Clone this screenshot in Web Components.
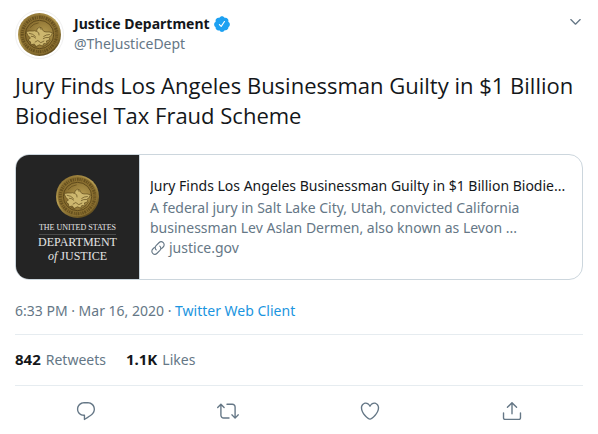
<!DOCTYPE html>
<html lang="en">
<head>
<meta charset="utf-8">
<meta name="viewport" content="width=device-width, initial-scale=1">
<title>Justice Department</title>
<style>
    body {
        background: #fff;
        color: #14171a;
        font: 14px/20px "Noto Sans", "Open Sans", sans-serif;
        margin: 0;
    }
</style>
</head>
<body>

<tweet-card>
    <tweet-header slot="header" name="Justice Department" handle="@TheJusticeDept"></tweet-header>
    Jury Finds Los Angeles Businessman Guilty in $1 Billion Biodiesel Tax Fraud Scheme
    <link-preview slot="preview" href="#justice" domain="justice.gov">
        <span slot="title">Jury Finds Los Angeles Businessman Guilty in $1 Billion Biodie...</span>
        A federal jury in Salt Lake City, Utah, convicted California businessman Lev Aslan Dermen, also known as Levon ...
    </link-preview>
    <tweet-meta slot="footer" time="6:33 PM · Mar 16, 2020" source="Twitter Web Client"></tweet-meta>
    <tweet-stats slot="footer" retweets="842" likes="1.1K"></tweet-stats>
    <tweet-actions slot="footer"></tweet-actions>
</tweet-card>

<script>
const ICONS = {
    chevron: '<path d="M20.207 8.147c-.39-.39-1.023-.39-1.414 0L12 14.94 5.207 8.147c-.39-.39-1.023-.39-1.414 0-.39.39-.39 1.023 0 1.414l7.5 7.5c.195.196.45.294.707.294s.512-.098.707-.293l7.5-7.5c.39-.39.39-1.022 0-1.413z"/>',
    verified: '<path d="M22.5 12.5c0-1.58-.875-2.95-2.148-3.6.154-.435.238-.905.238-1.4 0-2.21-1.71-3.998-3.818-3.998-.47 0-.92.084-1.336.25C14.818 2.415 13.51 1.5 12 1.5s-2.816.917-3.437 2.25c-.415-.165-.866-.25-1.336-.25-2.11 0-3.818 1.79-3.818 4 0 .494.083.964.237 1.4-1.272.65-2.147 2.018-2.147 3.6 0 1.495.782 2.798 1.942 3.486-.02.17-.032.34-.032.514 0 2.21 1.708 4 3.818 4 .47 0 .92-.086 1.335-.25.62 1.334 1.926 2.25 3.437 2.25 1.512 0 2.818-.916 3.437-2.25.415.163.865.248 1.336.248 2.11 0 3.818-1.79 3.818-4 0-.174-.012-.344-.033-.513 1.158-.687 1.943-1.99 1.943-3.484zm-6.616-3.334l-4.334 6.5c-.145.217-.382.334-.625.334-.143 0-.288-.04-.416-.126l-.115-.094-2.415-2.415c-.293-.293-.293-.768 0-1.06s.768-.294 1.06 0l1.77 1.767 3.825-5.74c.23-.345.696-.436 1.04-.207.346.23.44.696.21 1.04z"/>',
    link: '<g fill="none" stroke="currentColor" stroke-width="1.7" stroke-linecap="round"><path d="M9.3 14.9c-2-1.8-2-4.6-.2-6.5l4.3-4.3c1.9-1.900 4.700-1.900 6.500-.1s1.800 4.700-.1 6.500l-2.500 2.500"/><path d="M14.700 9.100c2 1.800 2 4.600.2 6.500l-4.300 4.300c-1.900 1.900-4.700 1.900-6.500.1s-1.800-4.700.1-6.500l2.500-2.500"/></g>',
    reply: '<path d="M14.046 2.242l-4.148-.01h-.002c-4.374 0-7.8 3.427-7.8 7.802 0 4.098 3.186 7.206 7.465 7.37v3.828c0 .108.044.286.12.403.142.225.384.347.632.347.138 0 .277-.038.402-.118.264-.168 6.473-4.14 8.088-5.506 1.902-1.61 3.04-3.97 3.043-6.312v-.017c-.006-4.367-3.43-7.787-7.8-7.788zm3.787 12.972c-1.134.96-4.862 3.405-6.772 4.643V16.67c0-.414-.335-.75-.75-.75h-.396c-3.66 0-6.318-2.476-6.318-5.886 0-3.534 2.768-6.302 6.3-6.302l4.147.01h.002c3.532 0 6.3 2.766 6.302 6.296-.003 1.91-.942 3.844-2.514 5.176z"/>',
    retweet: '<path d="M23.77 15.67c-.292-.293-.767-.293-1.06 0l-2.22 2.22V7.65c0-2.068-1.683-3.75-3.75-3.75h-5.85c-.414 0-.75.336-.75.75s.336.75.75.75h5.85c1.24 0 2.25 1.01 2.25 2.25v10.24l-2.22-2.22c-.293-.293-.768-.293-1.06 0s-.294.768 0 1.06l3.5 3.5c.145.147.337.22.53.22s.383-.072.53-.22l3.5-3.5c.294-.292.294-.767 0-1.06zm-10.66 3.28H7.26c-1.24 0-2.25-1.01-2.25-2.25V6.46l2.22 2.22c.148.147.34.22.532.22s.384-.073.53-.22c.293-.293.293-.768 0-1.06l-3.5-3.5c-.293-.294-.768-.294-1.06 0l-3.5 3.5c-.294.292-.294.767 0 1.06s.767.293 1.06 0l2.22-2.22V16.7c0 2.068 1.683 3.75 3.75 3.75h5.85c.414 0 .75-.336.75-.75s-.337-.75-.75-.75z"/>',
    like: '<path d="M12 21.638h-.014C9.403 21.59 1.95 14.856 1.95 8.478c0-3.064 2.525-5.754 5.403-5.754 2.29 0 3.83 1.58 4.646 2.73.814-1.148 2.354-2.73 4.645-2.73 2.88 0 5.404 2.69 5.404 5.755 0 6.376-7.454 13.11-10.037 13.157H12zM7.354 4.225c-2.08 0-3.903 1.988-3.903 4.255 0 5.74 7.034 11.596 8.55 11.658 1.518-.062 8.55-5.917 8.55-11.658 0-2.267-1.823-4.255-3.903-4.255-2.528 0-3.94 2.936-3.952 2.965-.23.562-1.156.562-1.387 0-.014-.03-1.425-2.965-3.954-2.965z"/>',
    share: '<path d="M17.53 7.47l-5-5c-.293-.293-.768-.293-1.06 0l-5 5c-.294.293-.294.768 0 1.06s.767.294 1.06 0l3.72-3.72V15c0 .414.336.75.75.75s.75-.336.75-.75V4.81l3.72 3.72c.146.147.338.22.53.22s.384-.072.53-.22c.293-.293.293-.767 0-1.06z"/><path d="M19.708 21.944H4.292C3.028 21.944 2 20.916 2 19.652V14c0-.414.336-.75.75-.75s.75.336.75.75v5.652c0 .437.355.792.792.792h15.416c.437 0 .792-.355.792-.792V14c0-.414.336-.75.75-.75s.75.336.75.75v5.652c0 1.264-1.028 2.292-2.292 2.292z"/>'
};

class TweetIcon extends HTMLElement {

    constructor() {
        super();
        this.shadow = this.attachShadow({ mode: 'open' });
    }

    connectedCallback() {
        this.shadow.innerHTML =
        `
        <style>
            :host {
                display: block;
                flex: none;
                height: 22px;
                width: 22px;
            }

            svg {
                display: block;
                fill: currentColor;
                height: 100%;
                width: 100%;
            }
        </style>

        <svg viewBox="0 0 24 24" aria-hidden="true">${ICONS[this.getAttribute('name')]}</svg>
        `;
    }
}

// Bronze department seal, shared by the avatar and the link preview
class DeptSeal extends HTMLElement {

    constructor() {
        super();
        this.shadow = this.attachShadow({ mode: 'open' });
    }

    connectedCallback() {
        this.shadow.innerHTML =
        `
        <style>
            :host {
                --light: #b89e52;
                --mid: #8a6f30;
                --dark: #574317;
                display: block;
            }

            svg {
                display: block;
                width: 100%;
            }
        </style>

        <svg viewBox="0 0 100 100" role="img" aria-label="Department seal">
            <defs>
                <linearGradient id="rim" x1="0.2" y1="0" x2="0.8" y2="1">
                    <stop offset="0" style="stop-color: var(--mid)"/>
                    <stop offset="0.4" style="stop-color: var(--light)"/>
                    <stop offset="1" style="stop-color: var(--dark)"/>
                </linearGradient>
                <radialGradient id="face" cx="0.65" cy="0.5" r="0.6">
                    <stop offset="0" style="stop-color: var(--light)"/>
                    <stop offset="1" style="stop-color: var(--mid)"/>
                </radialGradient>
            </defs>
            <circle cx="50" cy="50" r="50" fill="url(#rim)"/>
            <circle cx="50" cy="50" r="46" style="fill: var(--mid)"/>
            <circle cx="50" cy="50" r="40" fill="none" style="stroke: var(--dark)" stroke-width="7" stroke-dasharray="3 2 2 3 4 2" opacity="0.7"/>
            <circle cx="50" cy="50" r="33" fill="url(#face)" style="stroke: var(--dark)" stroke-width="2"/>
            <path d="M28 34q8-10 20-11M24 63q7 12 19 16M57 79q13-4 19-17" fill="none" style="stroke: var(--dark)" stroke-width="2" opacity="0.7"/>
            <path d="M19 43q8-2 15-1 5-2 9 1 0-8 7-10 6 0 7 6 2 5 8 5 7-1 15 2-1 8-9 11l3 3q-2 5-8 5l2 7-8-1-3 6-7-3-8 4-4-6-8 2-1-7-6-4 6-5q-8-5-10-15z" style="fill: #cdb76e; stroke: var(--dark)" stroke-width="1.500"/>
            <path d="M25 47q10 1 16 8M30 54q7 0 12 5M74 50q-9 0-15 5M70 57q-6-1-12 3M44 43q6 2 5 9M39 68l7-4 7 5 8-4M51 35l3 4" fill="none" style="stroke: var(--dark)" stroke-width="2" opacity="0.75"/>
        </svg>
        `;
    }
}

class TweetHeader extends HTMLElement {

    constructor() {
        super();
        this.shadow = this.attachShadow({ mode: 'open' });
    }

    connectedCallback() {
        this.shadow.innerHTML =
        `
        <style>
            :host {
                align-items: flex-start;
                display: flex;
                gap: 10px;
            }

            .avatar {
                border: 1px solid #f0f0f0;
                border-radius: 50%;
                box-sizing: border-box;
                padding: 2px;
                width: 49px;
            }

            .author {
                color: inherit;
                flex: 1;
                padding-top: 4px;
                text-decoration: none;
            }

            .name {
                align-items: center;
                display: flex;
                font-weight: 700;
                gap: 3px;
            }

            .name tweet-icon {
                color: #1da1f2;
                height: 18px;
                width: 18px;
            }

            .handle {
                color: #657786;
            }

            button {
                background: none;
                border: 0;
                color: #657786;
                padding: 4px 0;
            }

            button tweet-icon {
                height: 15px;
                width: 15px;
            }
        </style>

        <dept-seal class="avatar"></dept-seal>
        <a class="author" href="#profile">
            <div class="name">${this.getAttribute('name')}<tweet-icon name="verified"></tweet-icon></div>
            <div class="handle">${this.getAttribute('handle')}</div>
        </a>
        <button type="button" aria-label="More"><tweet-icon name="chevron"></tweet-icon></button>
        `;
    }
}

class LinkPreview extends HTMLElement {

    constructor() {
        super();
        this.shadow = this.attachShadow({ mode: 'open' });
    }

    connectedCallback() {
        this.shadow.innerHTML =
        `
        <style>
            :host {
                display: block;
            }

            a {
                border: 1px solid #ccd6dd;
                border-radius: 14px;
                color: inherit;
                display: flex;
                overflow: hidden;
                text-decoration: none;
            }

            .media {
                align-items: center;
                background: #242424;
                border-right: 1px solid #ccd6dd;
                color: #e4e4e4;
                display: flex;
                flex: none;
                flex-direction: column;
                font: 12px/14px "Liberation Serif", serif;
                padding: 20px 0 16px;
                width: 123px;
            }

            dept-seal {
                margin-bottom: 4px;
                width: 43px;
            }

            .country {
                border-bottom: 1px solid #4a4a4a;
                font-size: 8px;
                line-height: 12px;
            }

            .text {
                align-self: center;
                color: #657786;
                flex: 1;
                min-width: 0;
                padding: 0 10px;
            }

            .title {
                color: #14171a;
                margin-bottom: 2px;
                overflow: hidden;
                text-overflow: ellipsis;
                white-space: nowrap;
            }

            .domain {
                align-items: center;
                display: flex;
                gap: 3px;
            }

            .domain tweet-icon {
                height: 16px;
                width: 16px;
            }
        </style>

        <a href="${this.getAttribute('href')}">
            <div class="media">
                <dept-seal></dept-seal>
                <div class="country">THE UNITED STATES</div>
                <div>DEPARTMENT</div>
                <div><i>of</i> JUSTICE</div>
            </div>
            <div class="text">
                <div class="title"><slot name="title"></slot></div>
                <div><slot></slot></div>
                <div class="domain"><tweet-icon name="link"></tweet-icon>${this.getAttribute('domain')}</div>
            </div>
        </a>
        `;
    }
}

class TweetMeta extends HTMLElement {

    constructor() {
        super();
        this.shadow = this.attachShadow({ mode: 'open' });
    }

    connectedCallback() {
        this.shadow.innerHTML =
        `
        <style>
            :host {
                color: #657786;
                display: block;
                padding: 21px 0 13px;
            }

            a {
                color: #1b95e0;
                text-decoration: none;
            }
        </style>

        <span>${this.getAttribute('time')}</span> · <a href="#source">${this.getAttribute('source')}</a>
        `;
    }
}

class TweetStats extends HTMLElement {

    constructor() {
        super();
        this.shadow = this.attachShadow({ mode: 'open' });
    }

    connectedCallback() {
        this.shadow.innerHTML =
        `
        <style>
            :host {
                border: 1px solid #e6ecf0;
                border-width: 1px 0;
                color: #657786;
                display: flex;
                gap: 20px;
                padding: 15px 0;
            }

            a {
                align-items: baseline;
                color: inherit;
                display: flex;
                gap: 5px;
                text-decoration: none;
            }

            b {
                color: #14171a;
                font-size: 15px;
                line-height: 18px;
            }
        </style>

        <a href="#retweets"><b>${this.getAttribute('retweets')}</b> Retweets</a>
        <a href="#likes"><b>${this.getAttribute('likes')}</b> Likes</a>
        `;
    }
}

class TweetActions extends HTMLElement {

    constructor() {
        super();
        this.shadow = this.attachShadow({ mode: 'open' });
    }

    connectedCallback() {
        this.shadow.innerHTML =
        `
        <style>
            :host {
                display: grid;
                grid-template-columns: repeat(4, 1fr);
                justify-items: center;
                padding: 14px 0;
            }

            button {
                background: none;
                border: 0;
                color: #657786;
                padding: 0;
            }
        </style>

        <button type="button" aria-label="Reply"><tweet-icon name="reply"></tweet-icon></button>
        <button type="button" aria-label="Retweet"><tweet-icon name="retweet"></tweet-icon></button>
        <button type="button" aria-label="Like"><tweet-icon name="like"></tweet-icon></button>
        <button type="button" aria-label="Share"><tweet-icon name="share"></tweet-icon></button>
        `;
    }
}

class TweetCard extends HTMLElement {

    constructor() {
        super();
        this.shadow = this.attachShadow({ mode: 'open' });
    }

    connectedCallback() {
        this.shadow.innerHTML =
        `
        <style>
            :host {
                display: block;
                padding: 10px 15px 0;
            }

            p {
                font-family: "Open Sans", "Noto Sans", sans-serif;
                font-size: 22px;
                line-height: 30px;
                margin: 11px 0 24px;
            }
        </style>

        <article>
            <slot name="header"></slot>
            <p><slot></slot></p>
            <slot name="preview"></slot>
            <slot name="footer"></slot>
        </article>
        `;
    }
}

customElements.define('tweet-icon', TweetIcon);
customElements.define('dept-seal', DeptSeal);
customElements.define('tweet-header', TweetHeader);
customElements.define('link-preview', LinkPreview);
customElements.define('tweet-meta', TweetMeta);
customElements.define('tweet-stats', TweetStats);
customElements.define('tweet-actions', TweetActions);
customElements.define('tweet-card', TweetCard);
</script>
</body>
</html>
